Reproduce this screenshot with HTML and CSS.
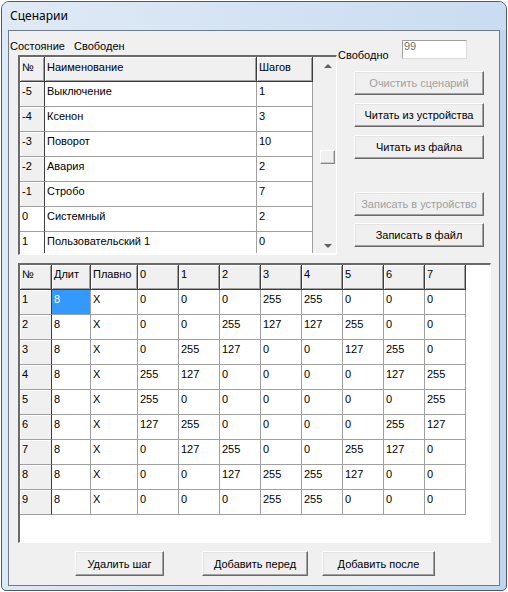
FILE: index.html
```html
<!DOCTYPE html>
<html lang="ru">
<head>
  <meta charset="UTF-8">
  <title>Сценарии</title>
  <link rel="stylesheet" href="styles.css">
</head>
<body>
  <div class="window">
    <div class="titlebar">Сценарии</div>
    <div class="client">
      <div class="top">
        <div class="top-left">
          <div class="status"><span class="status-label">Состояние</span><span>Свободен</span></div>
          <div class="grid scen-grid">
            <div class="grid-body">
              <table>
                <colgroup><col style="width:25px"><col style="width:212px"><col style="width:56px"></colgroup>
                <tr class="head"><th>№</th><th>Наименование</th><th>Шагов</th></tr>
                <tr><th>-5</th><td>Выключение</td><td>1</td></tr>
                <tr><th>-4</th><td>Ксенон</td><td>3</td></tr>
                <tr><th>-3</th><td>Поворот</td><td>10</td></tr>
                <tr><th>-2</th><td>Авария</td><td>2</td></tr>
                <tr><th>-1</th><td>Стробо</td><td>7</td></tr>
                <tr><th class="plain">0</th><td>Системный</td><td>2</td></tr>
                <tr><th class="plain">1</th><td>Пользовательский 1</td><td>0</td></tr>
              </table>
            </div>
            <div class="vscroll">
              <div class="sb-btn"><span class="arrow up"></span></div>
              <div class="sb-track"><div class="thumb"></div></div>
              <div class="sb-btn"><span class="arrow down"></span></div>
            </div>
          </div>
        </div>
        <div class="top-right">
          <div class="free"><span class="free-label">Свободно</span><div class="free-box">99</div></div>
          <button class="btn side b1" disabled>Очистить сценарий</button>
          <button class="btn side b2">Читать из устройства</button>
          <button class="btn side b3">Читать из файла</button>
          <button class="btn side b4" disabled>Записать в устройство</button>
          <button class="btn side b5">Записать в файл</button>
        </div>
      </div>

      <div class="grid steps-grid">
        <table>
          <colgroup>
            <col style="width:32px"><col style="width:39px"><col style="width:47px">
            <col style="width:41px"><col style="width:41px"><col style="width:41px"><col style="width:41px">
            <col style="width:41px"><col style="width:41px"><col style="width:41px"><col style="width:41px">
            <col>
          </colgroup>
          <tr class="head"><th>№</th><th>Длит</th><th>Плавно</th><th>0</th><th>1</th><th>2</th><th>3</th><th>4</th><th>5</th><th>6</th><th>7</th><th class="fill"></th></tr>
          <tr><th>1</th><td class="sel">8</td><td>X</td><td>0</td><td>0</td><td>0</td><td>255</td><td>255</td><td>0</td><td>0</td><td>0</td><td class="fill"></td></tr>
          <tr><th>2</th><td>8</td><td>X</td><td>0</td><td>0</td><td>255</td><td>127</td><td>127</td><td>255</td><td>0</td><td>0</td><td class="fill"></td></tr>
          <tr><th>3</th><td>8</td><td>X</td><td>0</td><td>255</td><td>127</td><td>0</td><td>0</td><td>127</td><td>255</td><td>0</td><td class="fill"></td></tr>
          <tr><th>4</th><td>8</td><td>X</td><td>255</td><td>127</td><td>0</td><td>0</td><td>0</td><td>0</td><td>127</td><td>255</td><td class="fill"></td></tr>
          <tr><th>5</th><td>8</td><td>X</td><td>255</td><td>0</td><td>0</td><td>0</td><td>0</td><td>0</td><td>0</td><td>255</td><td class="fill"></td></tr>
          <tr><th>6</th><td>8</td><td>X</td><td>127</td><td>255</td><td>0</td><td>0</td><td>0</td><td>0</td><td>255</td><td>127</td><td class="fill"></td></tr>
          <tr><th>7</th><td>8</td><td>X</td><td>0</td><td>127</td><td>255</td><td>0</td><td>0</td><td>255</td><td>127</td><td>0</td><td class="fill"></td></tr>
          <tr><th>8</th><td>8</td><td>X</td><td>0</td><td>0</td><td>127</td><td>255</td><td>255</td><td>127</td><td>0</td><td>0</td><td class="fill"></td></tr>
          <tr><th>9</th><td>8</td><td>X</td><td>0</td><td>0</td><td>0</td><td>255</td><td>255</td><td>0</td><td>0</td><td>0</td><td class="fill"></td></tr>
        </table>
      </div>

      <div class="actions">
        <button class="btn a1">Удалить шаг</button>
        <button class="btn a2">Добавить перед</button>
        <button class="btn a3">Добавить после</button>
      </div>
    </div>
  </div>
</body>
</html>
```

FILE: styles.css
```css
/* окно в стиле Windows 7 */
* { box-sizing: border-box; }
body { margin: 0; background: #fff; font-family: "Liberation Sans", Arial, sans-serif; font-size: 11px; color: #000; }

.window {
  margin: 1px 0 0 1px;
  width: 506px; height: 590px;
  border: 1px solid #4f5a66;
  border-radius: 8px 8px 5px 5px;
  background: linear-gradient(to right, #dce8f5, #bfd6f0);
  padding: 0 6px 4px 6px;
  display: flex; flex-direction: column;
}
.titlebar {
  height: 28px; padding: 6px 0 0 8px; margin: 0 -6px;
  font-family: "Noto Sans", "Open Sans", sans-serif; font-size: 12px; line-height: 16px;
  background: linear-gradient(to right, #dfeaf6, #c9dcf1);
  border-radius: 7px 7px 0 0;
}
.client {
  height: 556px;
  border: 1px solid #6f7b88;
  background: #f0f0f0;
  display: flex; flex-direction: column;
}

.top { display: flex; height: 224px; }
.top-left { width: 328px; }
.status { height: 24px; padding: 9px 0 0 1px; line-height: 13px; }
.status-label { display: inline-block; width: 64px; }

/* таблицы */
.grid {
  margin-left: 9px;
  background: #fff;
  border-style: solid;
  border-width: 2px 1px 1px 2px;
  border-color: #696969 #fff #fff #696969;
  overflow: hidden;
}
.grid table { border-collapse: separate; border-spacing: 0; table-layout: fixed; }
.grid tr { height: 25px; }
.grid td, .grid th {
  padding: 3px 2px 0; vertical-align: top; text-align: left; font-weight: normal;
  line-height: 13px; white-space: nowrap; overflow: hidden;
  border-right: 1px solid #a0a0a0; border-bottom: 1px solid #a0a0a0;
}
.grid th {
  background: #f0f0f0;
  border-right-color: #3c3c3c;
  box-shadow: inset 1px 1px #fff;
}
.grid th.plain { background: #fff; box-shadow: none; }
.grid tr.head th { border-bottom-color: #3c3c3c; padding-top: 4px; box-shadow: inset 1px 1px #fff, inset -1px -1px #a0a0a0; }
.grid .sel { background: #3399ff; color: #fff; }

.scen-grid { width: 319px; height: 200px; display: flex; }
.scen-grid .grid-body { width: 293px; height: 196px; overflow: hidden; }
.scen-grid table { width: 293px; }

.vscroll { width: 23px; height: 196px; background: #f0f0f0; padding-left: 6px; display: flex; flex-direction: column; }
.sb-btn { height: 17px; display: flex; align-items: center; justify-content: center; }
.sb-track { flex: 1; }
.thumb {
  margin: 76px 0 0 1px; width: 15px; height: 14px;
  background: #f0f0f0;
  border: 1px solid; border-color: #fff #888 #888 #fff;
  box-shadow: inset -1px -1px #c8c8c8;
}
.arrow { width: 0; height: 0; border-left: 4px solid transparent; border-right: 4px solid transparent; }
.arrow.up { border-bottom: 4px solid #606060; margin-top: 1px; }
.arrow.down { border-top: 4px solid #606060; margin-top: 2px; }

.top-right { flex: 1; display: flex; flex-direction: column; align-items: flex-start; padding-top: 9px; }
.free { display: flex; height: 19px; }
.free-label { width: 64px; margin-left: 1px; padding-top: 9px; line-height: 13px; }
.free-box {
  width: 65px; height: 19px; background: #fff; color: #6d6d6d;
  border: 1px solid; border-color: #a0a0a0 #dcdcdc #dcdcdc #a0a0a0;
  padding-left: 1px; line-height: 9px; padding-top: 1px;
}

.btn {
  font-family: "Liberation Sans", Arial, sans-serif; font-size: 11px; color: #000;
  background: #f0f0f0; padding: 0;
  border: 1px solid; border-color: #fff #696969 #696969 #fff;
  box-shadow: inset -1px -1px #a0a0a0, inset 1px 1px #e3e3e3;
}
.btn:disabled { color: #a0a0a0; }
.btn.side { width: 130px; height: 24px; margin-left: 17px; }
.b1 { margin-top: 12px; }
.b2, .b3 { margin-top: 8px; }
.b4 { margin-top: 33px; }
.b5 { margin-top: 7px; }

.steps-grid { margin-top: 8px; width: 473px; height: 280px; }
.steps-grid table { width: 100%; }
.steps-grid td, .steps-grid th { padding-top: 3px; }
.steps-grid tr.head th { padding-top: 3px; }
.steps-grid tr.head th.fill { background: #fff; border: none; box-shadow: none; }
.steps-grid td.fill { border: none; }

.actions { display: flex; margin-top: 8px; padding-left: 66px; }
.actions .btn { height: 25px; }
.a1 { width: 89px; }
.a2 { width: 106px; margin-left: 38px; }
.a3 { width: 113px; margin-left: 14px; }
```
